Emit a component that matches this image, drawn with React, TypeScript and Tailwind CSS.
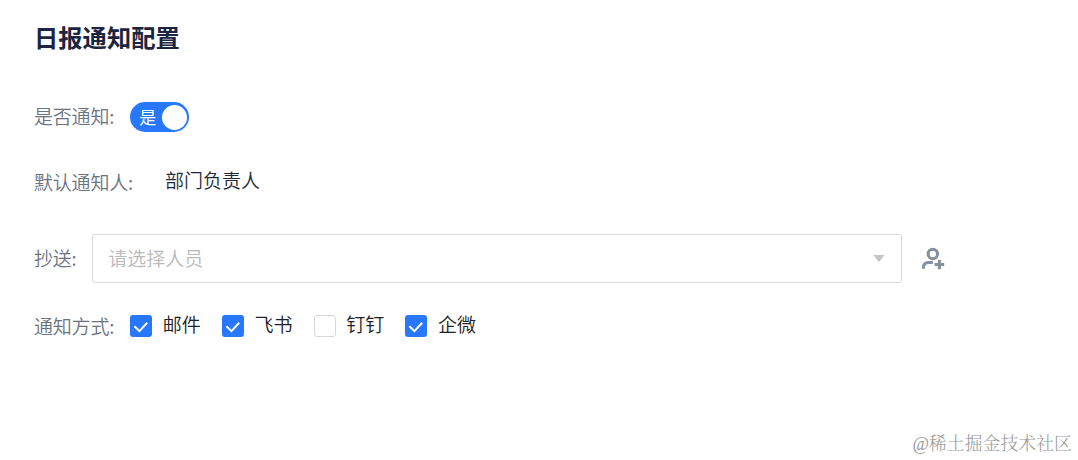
import React, { useState } from 'react';

const METHODS = ['邮件', '飞书', '钉钉', '企微'];

const Label: React.FC<{ children: React.ReactNode }> = ({ children }) => (
  <span className="shrink-0 whitespace-nowrap tracking-[-0.2px] text-[#6b7280]">{children}:</span>
);

const UserAddIcon = () => (
  <svg className="h-6 w-6" viewBox="0 0 24 24" fill="none" stroke="#868f9e" strokeWidth="3">
    <circle cx="11.8" cy="7" r="4.7" />
    <path d="M2.5 21.8v-1.2c0-3.2 2-5.1 5-5.1h4.3" />
    <path d="M18.4 12.9v9.4M13.6 17.6h9.6" />
  </svg>
);

const App: React.FC = () => {
  const [notify, setNotify] = useState(true);
  const [checked, setChecked] = useState<string[]>(['邮件', '飞书', '企微']);

  const toggle = (name: string) => {
    setChecked(checked.includes(name) ? checked.filter((c) => c !== name) : [...checked, name]);
  };

  return (
    <div className="flex h-[460px] w-full flex-col bg-white pl-[34px] pt-[19px] font-['Noto_Sans_CJK_SC',sans-serif] text-[19px] leading-[30px] font-[350]">
      <h1 className="h-9 text-[24.3px] leading-9 font-bold text-[#1d2440]">日报通知配置</h1>

      <div className="mt-[47px] flex h-[30px]">
        <div className="-mt-px">
          <Label>是否通知</Label>
        </div>
        <button
          role="switch"
          aria-checked={notify}
          onClick={() => setNotify(!notify)}
          className={`ml-4 flex h-[30px] w-[59px] items-center justify-between rounded-full pr-[2px] pl-[9px] ${notify ? 'bg-[#2878ff]' : 'bg-gray-300'}`}
        >
          <span className="text-[17px] font-normal text-white">{notify ? '是' : '否'}</span>
          <span className="h-[25px] w-[25px] rounded-full bg-white" />
        </button>
      </div>

      <div className="mt-[35px] flex h-[30px]">
        <Label>默认通知人</Label>
        <span className="-mt-0.5 ml-8 text-[#1f2937]">部门负责人</span>
      </div>

      <div className="mt-[37px] flex h-[49px] items-center">
        <div className="-mt-0.5">
          <Label>抄送</Label>
        </div>
        <div className="ml-[15.6px] flex h-[49px] w-[810px] items-center justify-between rounded-[3px] border border-[#d9d9d9] pr-4 pl-[15px]">
          <span className="-mt-0.5 text-[#bababa]">请选择人员</span>
          <svg className="h-[7px] w-3" viewBox="0 0 12 7" fill="#c3c5c8">
            <path d="M.3 0h11.4L6 7z" />
          </svg>
        </div>
        <button className="ml-[19px]" aria-label="添加人员">
          <UserAddIcon />
        </button>
      </div>

      <div className="mt-7 flex h-[30px] items-center">
        <Label>通知方式</Label>
        <div className="ml-4 flex gap-[21px]">
          {METHODS.map((name) => (
            <button
              key={name}
              role="checkbox"
              aria-checked={checked.includes(name)}
              onClick={() => toggle(name)}
              className="flex items-center gap-[10.7px]"
            >
              {checked.includes(name) ? (
                <span className="flex h-[22px] w-[22px] items-center justify-center rounded-[3px] bg-[#2878ff]">
                  <svg className="h-[22px] w-[22px]" viewBox="0 0 22 22" fill="none" stroke="white" strokeWidth="2">
                    <path d="M4.4 11.3l5 4.8L17.2 7.8" />
                  </svg>
                </span>
              ) : (
                <span className="h-[22px] w-[22px] rounded-[3px] border border-[#d9d9d9] bg-white" />
              )}
              <span className="-mt-1 text-[#202124]">{name}</span>
            </button>
          ))}
        </div>
      </div>

      <div className="mt-auto mb-0.5 self-end pr-1.5 font-['Liberation_Serif','Noto_Serif_CJK_SC','Noto_Sans_CJK_SC',serif] text-[17.9px] leading-7 font-light text-[#999999]">
        @稀土掘金技术社区
      </div>
    </div>
  );
};

export default App;
